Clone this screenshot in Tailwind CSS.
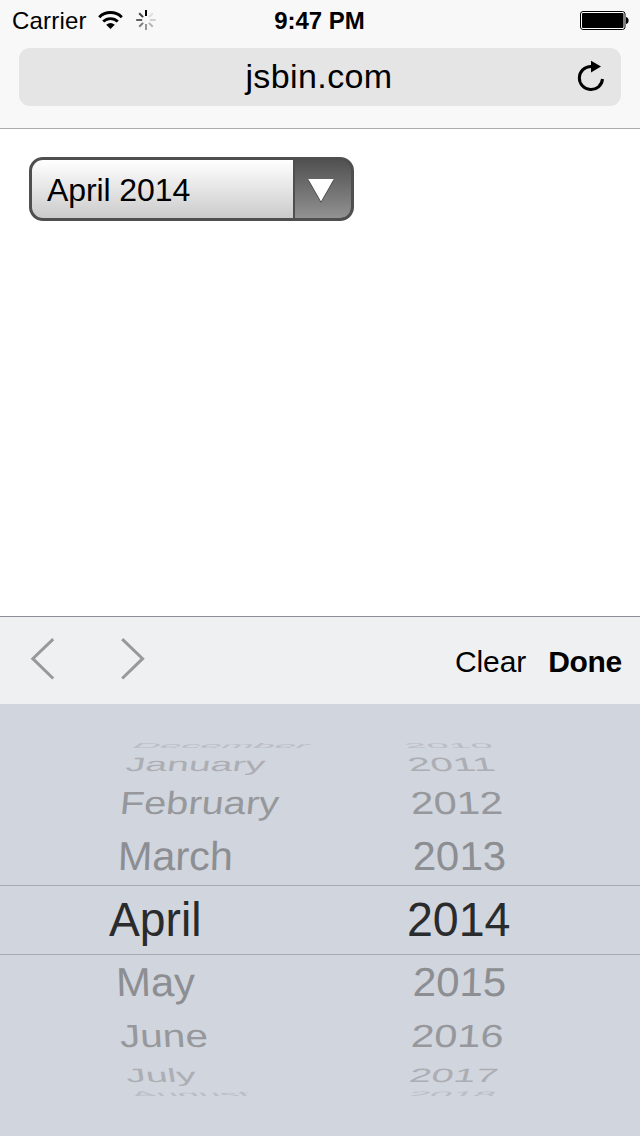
<!DOCTYPE html>
<html lang="en">
<head>
<meta charset="utf-8">
<title>jsbin.com</title>
<script src="https://cdn.jsdelivr.net/npm/@tailwindcss/browser@4"></script>
</head>
<body class="bg-white">
<div class="flex flex-col w-[640px] h-[1136px] overflow-hidden text-black font-['Liberation_Sans',Arial,sans-serif]">
  <header class="h-[129px] shrink-0 bg-[#f8f8f8] border-b border-[#acacac]">
    <div class="h-12 grid grid-cols-3 pl-3 pr-[11px] text-2xl/[42px]">
      <div class="flex">
        <span class="tracking-[0.2px] w-[86px]">Carrier</span>
        <svg class="w-[26px] h-10" viewBox="98 0 26 40" fill="none" stroke="#000">
          <path d="M99.2 17.2a16.2 16.2 0 0 1 22.6 0" stroke-width="3"/>
          <path d="M103.2 21.5a10.5 10.5 0 0 1 14.6 0" stroke-width="2.8"/>
          <path d="M106.2 24.8q4.3-3.6 8.6 0l-4.3 4.2z" fill="#000" stroke="none"/>
        </svg>
        <svg class="ml-3 w-5 h-10" viewBox="136 0 20 40" stroke-width="2">
          <path d="M146 10v6" stroke="#000"/>
          <path d="M152.8 13.2l-3.9 3.9" stroke="#dedede"/>
          <path d="M155.8 20h-6" stroke="#d0d0d0"/>
          <path d="M152.8 26.8l-3.9-3.9" stroke="#b5b5b5"/>
          <path d="M146 30v-6" stroke="#989898"/>
          <path d="M139.2 26.8l3.9-3.9" stroke="#7d7d7d"/>
          <path d="M136.2 20h6" stroke="#606060"/>
          <path d="M139.2 13.2l3.9 3.9" stroke="#404040"/>
        </svg>
      </div>
      <div class="text-center font-bold -ml-0.5">9:47 PM</div>
      <svg class="justify-self-end w-[50px] h-10" viewBox="579 0 50 40">
        <rect x="580.5" y="11.5" width="44.5" height="18" rx="2.5" fill="#fff" stroke="#000"/>
        <rect x="582" y="13" width="41.5" height="15" rx="1" fill="#000"/>
        <path d="M626 17q2.6 .5 2.6 3.5t-2.6 3.5z"/>
      </svg>
    </div>
    <div class="mx-[19px] h-[58px] rounded-[11px] bg-[#e5e5e5] grid grid-cols-[1fr_auto_1fr]">
      <span class="col-start-2 text-[34px]/[56px] tracking-[0.4px] -ml-0.5">jsbin.com</span>
      <svg class="justify-self-end mt-3 mr-4 w-[28px] h-[34px]" viewBox="577 60 28 34">
        <path d="M602.5 79A11.6 11.6 0 1 1 591 66.4" fill="none" stroke="#000" stroke-width="3"/>
        <path d="M591 60.8l10 5.8-10 6z"/>
      </svg>
    </div>
  </header>

  <main class="flex-1 pt-7 pl-[29px]">
    <div class="flex w-[325px] h-16 rounded-[14px] border-[3px] border-[#4f4f50] bg-[#4f4f50] overflow-hidden">
      <div class="w-[261px] pl-[15px] text-[32px]/[61px] tracking-[-0.1px] bg-linear-to-b from-white to-[#cbcbcb]">April 2014</div>
      <div class="ml-0.5 flex-1 rounded-r-[10px] bg-linear-to-b from-[#515152] to-[#929293]">
        <svg class="w-14 h-[58px]" viewBox="295 160 56 58">
          <path d="M308 178h26l-13 23z" fill="#333" transform="translate(0 1.8)"/>
          <path d="M308.2 179h25.6L321 201.4z" fill="#fff"/>
        </svg>
      </div>
    </div>
  </main>

  <section class="h-[520px] shrink-0 bg-[#d1d5de]">
    <div class="h-[88px] border-t border-[#8c8f99] bg-[#eff0f2] flex pl-[30px] pr-[18px] text-[30px]/[90px]">
      <svg class="w-[116px] h-[87px]" viewBox="30 617 116 87" fill="none" stroke="#999" stroke-width="3">
        <path d="M53.2 639.2L32.8 658.7l20.4 19.8"/>
        <path d="M122.2 639.2l20.4 19.5-20.4 19.8"/>
      </svg>
      <span class="ml-auto tracking-[-0.1px]">Clear</span>
      <span class="ml-[22px] font-bold tracking-[-0.3px]">Done</span>
    </div>

    <div class="pt-[39px] flex flex-col text-[40px]">
      <svg class="w-full h-[6px]" viewBox="0 743 640 6" fill="#babdc4">
        <text transform="matrix(1 0 -.25 .17 130 747.6)" textLength="176" lengthAdjust="spacingAndGlyphs">December</text>
        <text transform="matrix(1 0 .1 .17 406 747.6)" textLength="88" lengthAdjust="spacingAndGlyphs">2010</text>
      </svg>
      <svg class="w-full h-[31px]" viewBox="0 749 640 31" fill="#acaeb4">
        <text transform="matrix(1 0 -.08 .48 125 771.2)" textLength="139" lengthAdjust="spacingAndGlyphs">January</text>
        <text transform="matrix(1 0 .12 .48 409.5 771.2)" textLength="87" lengthAdjust="spacingAndGlyphs">2011</text>
      </svg>
      <svg class="w-full h-[46px]" viewBox="0 780 640 46" fill="#96989c">
        <text transform="matrix(1 0 -.08 .8 119 813.6)" textLength="159" lengthAdjust="spacingAndGlyphs">February</text>
        <text transform="matrix(1 0 .06 .8 411.5 813.6)" textLength="92" lengthAdjust="spacingAndGlyphs">2012</text>
      </svg>
      <svg class="w-full h-[59px]" viewBox="0 826 640 59" fill="#8c8e92">
        <text transform="matrix(1 0 -.03 1.01 117.5 870.4)" textLength="115" lengthAdjust="spacingAndGlyphs">March</text>
        <text transform="matrix(1 0 .03 1.01 413 870.4)" textLength="93.5" lengthAdjust="spacingAndGlyphs">2013</text>
      </svg>
      <div class="h-[70px] border-y border-[#a7aab1]">
        <svg class="w-full h-[68px]" viewBox="0 886 640 68" fill="#2a2b2d">
          <text transform="matrix(1 0 0 1.2 109 936.2)" textLength="92.5" lengthAdjust="spacingAndGlyphs">April</text>
          <text transform="matrix(1 0 0 1.2 407 936.2)" textLength="103.5" lengthAdjust="spacingAndGlyphs">2014</text>
        </svg>
      </div>
      <svg class="w-full h-[51px]" viewBox="0 955 640 51" fill="#8c8e92">
        <text transform="matrix(1 0 .03 1.01 116.5 996.3)" textLength="79" lengthAdjust="spacingAndGlyphs">May</text>
        <text transform="matrix(1 0 -.03 1.01 412.5 996.3)" textLength="93.5" lengthAdjust="spacingAndGlyphs">2015</text>
      </svg>
      <svg class="w-full h-[50px]" viewBox="0 1006 640 50" fill="#96989c">
        <text transform="matrix(1 0 .05 .8 120.5 1047.3)" textLength="88" lengthAdjust="spacingAndGlyphs">June</text>
        <text transform="matrix(1 0 -.06 .8 410.5 1047.3)" textLength="92.5" lengthAdjust="spacingAndGlyphs">2016</text>
      </svg>
      <svg class="w-full h-[34px]" viewBox="0 1056 640 34" fill="#acaeb4">
        <text transform="matrix(1 0 .08 .48 127 1081.7)" textLength="70" lengthAdjust="spacingAndGlyphs">July</text>
        <text transform="matrix(1 0 -.12 .48 408 1081.7)" textLength="88.5" lengthAdjust="spacingAndGlyphs">2017</text>
      </svg>
      <svg class="w-full h-[6px]" viewBox="0 1090 640 6" fill="#babdc4">
        <text transform="matrix(1 0 .2 .2 134 1097.4)" textLength="118" lengthAdjust="spacingAndGlyphs">August</text>
        <text transform="matrix(1 0 -.2 .2 406 1097.4)" textLength="87" lengthAdjust="spacingAndGlyphs">2018</text>
      </svg>
    </div>
  </section>
</div>
</body>
</html>
